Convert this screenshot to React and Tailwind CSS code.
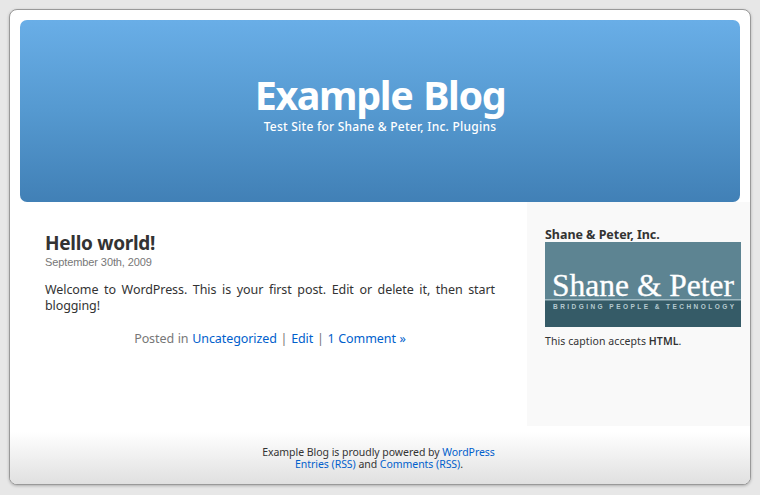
const sans = "font-['Noto_Sans','Open_Sans',sans-serif]";

function Link({ children }) {
  return <a href="#" className="text-[#0060cc]">{children}</a>;
}

function Header() {
  return (
    <header className="mx-[10px] flex h-[182px] flex-col items-center rounded-[7px] bg-linear-to-b from-[#69aee7] via-[#5599d0] via-50% to-[#4180b6] pt-[52px] text-white">
      <h1 className="h-[46px] text-[39.5px] leading-[46px] font-bold tracking-[-1.4px] whitespace-nowrap [word-spacing:2px]">Example Blog</h1>
      <p className="text-[12px] leading-[17px] font-medium tracking-[0.25px] whitespace-nowrap">Test Site for Shane &amp; Peter, Inc. Plugins</p>
    </header>
  );
}

function Post() {
  return (
    <article className="w-[517px] pt-[30px] pl-[35px]">
      <h2 className="h-[23px] text-[19px] leading-[23px] font-bold tracking-[-0.3px] text-[#333]">Hello world!</h2>
      <div className="h-[14px] font-['Liberation_Sans',Arial,sans-serif] text-[11px] leading-[14px] tracking-[-0.1px] text-[#777]">September 30th, 2009</div>
      <div className="mt-[13px] w-[450px] text-[12.5px] leading-[16px] text-[#333]">
        <p className="h-[16px] tracking-[-0.08px] whitespace-nowrap [text-align-last:justify]">Welcome to WordPress. This is your first post. Edit or delete it, then start</p>
        <p className="tracking-[-0.1px]">blogging!</p>
      </div>
      <p className="mt-[16px] w-[450px] text-center text-[12.5px] leading-[17px] tracking-[-0.09px] whitespace-nowrap text-[#777] [word-spacing:0.6px]">
        Posted in <Link>Uncategorized</Link> | <Link>Edit</Link> | <Link>1 Comment »</Link>
      </p>
    </article>
  );
}

function Logo() {
  return (
    <svg width="196" height="85" viewBox="0 0 196 85" className="block shrink-0">
      <rect width="196" height="58" fill="#5d8492" />
      <rect y="58" width="196" height="27" fill="#355b67" />
      <rect y="57" width="196" height="1.5" fill="#9fb9c2" />
      <text x="7" y="54" fill="#fff" stroke="#fff" strokeWidth="0.3" fontFamily="'Liberation Serif', serif" fontSize="32" textLength="182" lengthAdjust="spacingAndGlyphs">Shane &amp; Peter</text>
      <text x="8" y="67" fill="#b5cad0" fontFamily="'Liberation Sans', sans-serif" fontSize="6.5" fontWeight="bold" textLength="181">BRIDGING PEOPLE &amp; TECHNOLOGY</text>
    </svg>
  );
}

function Sidebar() {
  return (
    <aside className="h-[224px] w-[223px] bg-[#f9f9f9] pt-[25px] pl-[18px]">
      <h3 className="h-[15px] text-[12.5px] leading-[15px] font-bold tracking-[-0.04px] whitespace-nowrap text-[#333]">Shane &amp; Peter, Inc.</h3>
      <Logo />
      <p className="mt-[7px] text-[10.5px] leading-[14px] tracking-[0.08px] whitespace-nowrap text-[#333]">This caption accepts <strong className="font-semibold">HTML</strong>.</p>
    </aside>
  );
}

export default function App() {
  return (
    <div className={`h-[495px] w-[760px] overflow-hidden bg-[#e7e7e7] p-[9px] ${sans}`}>
      <div className="flex h-[476px] w-[742px] flex-col rounded-[8px] border border-[#999] bg-white pt-[10px] shadow-[0_1px_3px_rgba(0,0,0,0.25)]">
        <Header />
        <main className="flex h-[224px]">
          <Post />
          <Sidebar />
        </main>
        <footer className="flex-1 rounded-b-[7px] bg-linear-to-b from-white from-10% to-[#e0e0e0] pt-[20px] pr-[3px] text-center text-[10.5px] leading-[12px] tracking-[-0.04px] text-[#333]">
          <p>Example Blog is proudly powered by <Link>WordPress</Link></p>
          <p className="pl-px"><Link>Entries (RSS)</Link> and <Link>Comments (RSS)</Link>.</p>
        </footer>
      </div>
    </div>
  );
}
